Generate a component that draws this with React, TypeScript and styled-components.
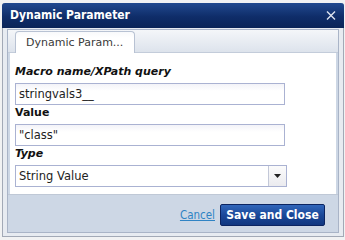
import React from "react";
import styled, { createGlobalStyle } from "styled-components";

const Global = createGlobalStyle`
  html, body { margin: 0; padding: 0; }
  body {
    background: #f1f2f3;
    font-family: "DejaVu Sans", Verdana, sans-serif;
    width: 345px;
    height: 240px;
    overflow: hidden;
  }
`;

const Page = styled.div`
  padding: 3px 1px 0 2px;
`;

const Dialog = styled.div`
  width: 342px;
  height: 234px;
  box-sizing: border-box;
  display: flex;
  flex-direction: column;
  background: #e7ebf1;
  border: 1px solid #a2a9b6;
  border-top: none;
  border-radius: 3px 3px 0 0;
  padding: 0 4px 3px 4px;
`;

const TitleBar = styled.div`
  height: 24px;
  flex: none;
  display: flex;
  align-items: center;
  justify-content: space-between;
  margin: 0 -5px 1px -5px;
  padding: 0 8px 1px 8px;
  border-radius: 3px 3px 0 0;
  background: linear-gradient(#21498f, #0f2d69 55%, #0b2558);
  color: #fff;
  font-family: "DejaVu Sans Condensed", "DejaVu Sans", sans-serif;
  font-weight: bold;
  font-size: 12px;
`;

const Frame = styled.div`
  flex: 1;
  display: flex;
  flex-direction: column;
  border: 1px solid #a9b4c7;
  background: #cdd7e5;
`;

const TabStrip = styled.div`
  height: 22px;
  flex: none;
  display: flex;
  align-items: flex-end;
  padding: 0 0 0 7px;
  margin: 0 0 0 0;
  background: linear-gradient(#f4f6f9, #dde3ec);
  border-bottom: 1px solid #c3ccda;
`;

const Tab = styled.div`
  width: 120px;
  height: 22px;
  margin-bottom: -1px;
  box-sizing: border-box;
  background: linear-gradient(#f8f9fb, #fff 6px);
  border: 1px solid #b8c2d3;
  border-bottom: none;
  border-radius: 4px 4px 0 0;
  font-size: 11px;
  color: #3a3a3a;
  padding: 4px 0 0 10px;
  white-space: nowrap;
`;

const Content = styled.div`
  background: #fff;
  margin: 0 2px;
  padding: 12px 5px 7px 5px;
  display: flex;
  flex-direction: column;
`;

const Label = styled.div<{ $italic?: boolean }>`
  font-weight: bold;
  font-style: ${(p) => (p.$italic ? "italic" : "normal")};
  font-size: 11px;
  color: #111;
  height: 14px;
  line-height: 14px;
  margin-bottom: 4px;
`;

const Input = styled.div`
  width: 270px;
  height: 22px;
  box-sizing: border-box;
  border: 1px solid #aab2d2;
  background: linear-gradient(#f3f3f8, #fff 7px);
  font-size: 11.5px;
  color: #222;
  padding: 3px 0 0 3px;
  margin-bottom: 1px;
`;

const Select = styled.div`
  width: 272px;
  height: 22px;
  box-sizing: border-box;
  border: 1px solid #aab2d2;
  display: flex;
  font-size: 11.5px;
  color: #222;
`;

const SelectValue = styled.div`
  flex: 1;
  padding: 3px 0 0 3px;
`;

const Arrow = styled.div`
  width: 17px;
  border-left: 1px solid #c3c8d8;
  background: linear-gradient(#fbfbfb, #ebebef);
  display: flex;
  align-items: center;
  justify-content: center;
`;

const Footer = styled.div`
  flex: 1;
  display: flex;
  align-items: center;
  justify-content: flex-end;
  gap: 5px;
  padding: 3px 13px 0 0;
  border-top: 1px solid #bfc8d6;
  margin: 0 0 0 0;
`;

const Link = styled.a`
  color: #2f83c4;
  text-decoration: underline;
  font-family: "DejaVu Sans Condensed", "DejaVu Sans", sans-serif;
  font-size: 11.5px;
  cursor: pointer;
`;

const Button = styled.button`
  height: 22px;
  width: 105px;
  padding: 0;
  border: 1px solid #0b2461;
  border-radius: 2px;
  background: linear-gradient(#3166ba, #1a4899 50%, #10367f);
  color: #fff;
  font-family: "DejaVu Sans Condensed", "DejaVu Sans", sans-serif;
  font-weight: bold;
  font-size: 12px;
`;

export default function App() {
  return (
    <>
      <Global />
      <Page>
        <Dialog>
          <TitleBar>
            <span>Dynamic Parameter</span>
            <svg width="10" height="9" viewBox="0 0 10 9">
              <path d="M1 0.5l8 8M9 0.5l-8 8" stroke="#dfe5f0" strokeWidth="1.4" />
            </svg>
          </TitleBar>
          <Frame>
            <TabStrip>
              <Tab>Dynamic Param...</Tab>
            </TabStrip>
            <Content>
              <Label $italic>Macro name/XPath query</Label>
              <Input>stringvals3__</Input>
              <Label>Value</Label>
              <Input>"class"</Input>
              <Label $italic>Type</Label>
              <Select>
                <SelectValue>String Value</SelectValue>
                <Arrow>
                  <svg width="7" height="4" viewBox="0 0 7 4">
                    <path d="M0 0h7L3.5 4z" fill="#222" />
                  </svg>
                </Arrow>
              </Select>
            </Content>
            <Footer>
              <Link>Cancel</Link>
              <Button>Save and Close</Button>
            </Footer>
          </Frame>
        </Dialog>
      </Page>
    </>
  );
}
